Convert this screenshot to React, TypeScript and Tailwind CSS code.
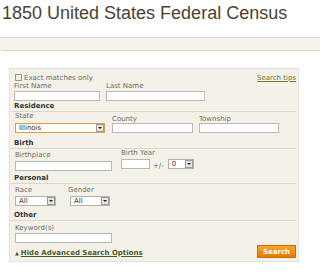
function Label({ children }: { children: React.ReactNode }) {
  return <div className="text-[7px] leading-[8px] text-[#6b6b6b] whitespace-nowrap">{children}</div>;
}

function Input({ w }: { w: string }) {
  return <div className={`${w} h-[10px] border border-[#b8b8b0] bg-white`} />;
}

function Select({ w, value, focus }: { w: string; value: string; focus?: boolean }) {
  return (
    <div
      className={`${w} h-[10px] flex items-center border ${
        focus ? 'border-[#d9a04a] bg-[#fffdf4]' : 'border-[#b3b3ab] bg-white'
      }`}
    >
      <span className="flex-1 pl-[3px] text-[7px] leading-[8px] text-[#333]">{value}</span>
      <span className="w-[8px] h-[8px] mr-[0px] flex items-center justify-center bg-[#e4e4e0] border border-[#9c9c96]">
        <span className="w-0 h-0 border-l-[2px] border-r-[2px] border-t-[2px] border-l-transparent border-r-transparent border-t-[#222]" />
      </span>
    </div>
  );
}

function Heading({ children, h }: { children: React.ReactNode; h: string }) {
  return (
    <div className={`${h} mr-[2px] flex items-end pl-[4px] pb-[1px] border-b border-[#dcd9cc]`}>
      <span className="text-[7px] leading-[8px] font-bold text-[#333]">{children}</span>
    </div>
  );
}

export default function App() {
  return (
    <div className="w-[320px] h-[275px] bg-white overflow-hidden font-['DejaVu_Sans',Verdana,sans-serif]">
      {/* Title */}
      <h1 className="pl-[2px] pt-[3px] text-[18px] leading-[20px] text-[#4a4332] font-['Liberation_Sans',Arial,sans-serif] whitespace-nowrap">
        1850 United States Federal Census
      </h1>

      {/* Tab strip */}
      <div className="mt-[14px] h-[14px] border-y border-[#d9d6ca] bg-[#f5f3ec] rounded-bl-[3px]" />

      {/* Search panel */}
      <div className="ml-[9px] mt-[17px] w-[290px] h-[194px] bg-[#f4f2e8] border border-[#e4e1d5] flex flex-col">
        <div className="mt-[4px] h-[9px] flex items-center justify-between pl-[5px] pr-[2px]">
          <div className="flex items-center">
            <span className="w-[7px] h-[7px] border border-[#9a9a94] bg-[#f0f0ec]" />
            <span className="ml-[2px] text-[7px] leading-[8px] text-[#666]">Exact matches only</span>
          </div>
          <span className="text-[7px] leading-[8px] text-[#6b7a34] underline">Search tips</span>
        </div>

        <div className="flex pl-[4px] gap-[6px]">
          <div className="w-[86px] flex flex-col gap-[1px]">
            <Label>First Name</Label>
            <Input w="w-[86px]" />
          </div>
          <div className="w-[99px] flex flex-col gap-[1px]">
            <Label>Last Name</Label>
            <Input w="w-[99px]" />
          </div>
        </div>

        <Heading h="h-[11px]">Residence</Heading>
        <div className="flex items-end pl-[5px]">
          <div className="w-[90px] flex flex-col gap-[3px]">
            <Label>State</Label>
            <Select w="w-[90px]" value="Illinois" focus />
          </div>
          <div className="ml-[7px] w-[81px] flex flex-col">
            <Label>County</Label>
            <Input w="w-[81px]" />
          </div>
          <div className="ml-[6px] w-[80px] flex flex-col">
            <Label>Township</Label>
            <Input w="w-[80px]" />
          </div>
        </div>

        <Heading h="h-[16px]">Birth</Heading>
        <div className="flex items-end pl-[5px]">
          <div className="w-[97px] flex flex-col gap-[2px]">
            <Label>Birthplace</Label>
            <Input w="w-[97px]" />
          </div>
          <div className="ml-[9px] mb-[1px] flex flex-col gap-[1px]">
            <Label>Birth Year</Label>
            <div className="flex items-center">
              <Input w="w-[29px]" />
              <span className="ml-[3px] mt-[4px] text-[7px] leading-[8px] text-[#666]">+/-</span>
              <div className="ml-[4px]">
                <Select w="w-[26px]" value="0" />
              </div>
            </div>
          </div>
        </div>

        <Heading h="h-[13px]">Personal</Heading>
        <div className="flex pl-[5px] mt-[2px]">
          <div className="w-[41px] flex flex-col gap-[2px]">
            <Label>Race</Label>
            <Select w="w-[41px]" value="All" />
          </div>
          <div className="ml-[12px] flex flex-col gap-[2px]">
            <Label>Gender</Label>
            <div className="ml-[2px]">
              <Select w="w-[40px]" value="All" />
            </div>
          </div>
        </div>

        <Heading h="h-[15px]">Other</Heading>
        <div className="pl-[5px] mt-[3px] flex flex-col gap-[1px]">
          <Label>Keyword(s)</Label>
          <Input w="w-[97px]" />
        </div>

        <div className="mt-[2px] flex items-center justify-between pl-[5px] pr-[2px]">
          <span className="mt-[2px] flex items-center gap-[2px] text-[7px] leading-[8px] font-bold text-[#4c5a2a]">
            <span className="text-[5px]">▲</span>
            <span className="underline">Hide Advanced Search Options</span>
          </span>
          <button className="w-[39px] h-[13px] flex items-center justify-center bg-gradient-to-b from-[#f9a42a] to-[#e27a00] border border-[#d06c00] text-white text-[7px] font-bold leading-[8px]">
            Search
          </button>
        </div>
      </div>
    </div>
  );
}
